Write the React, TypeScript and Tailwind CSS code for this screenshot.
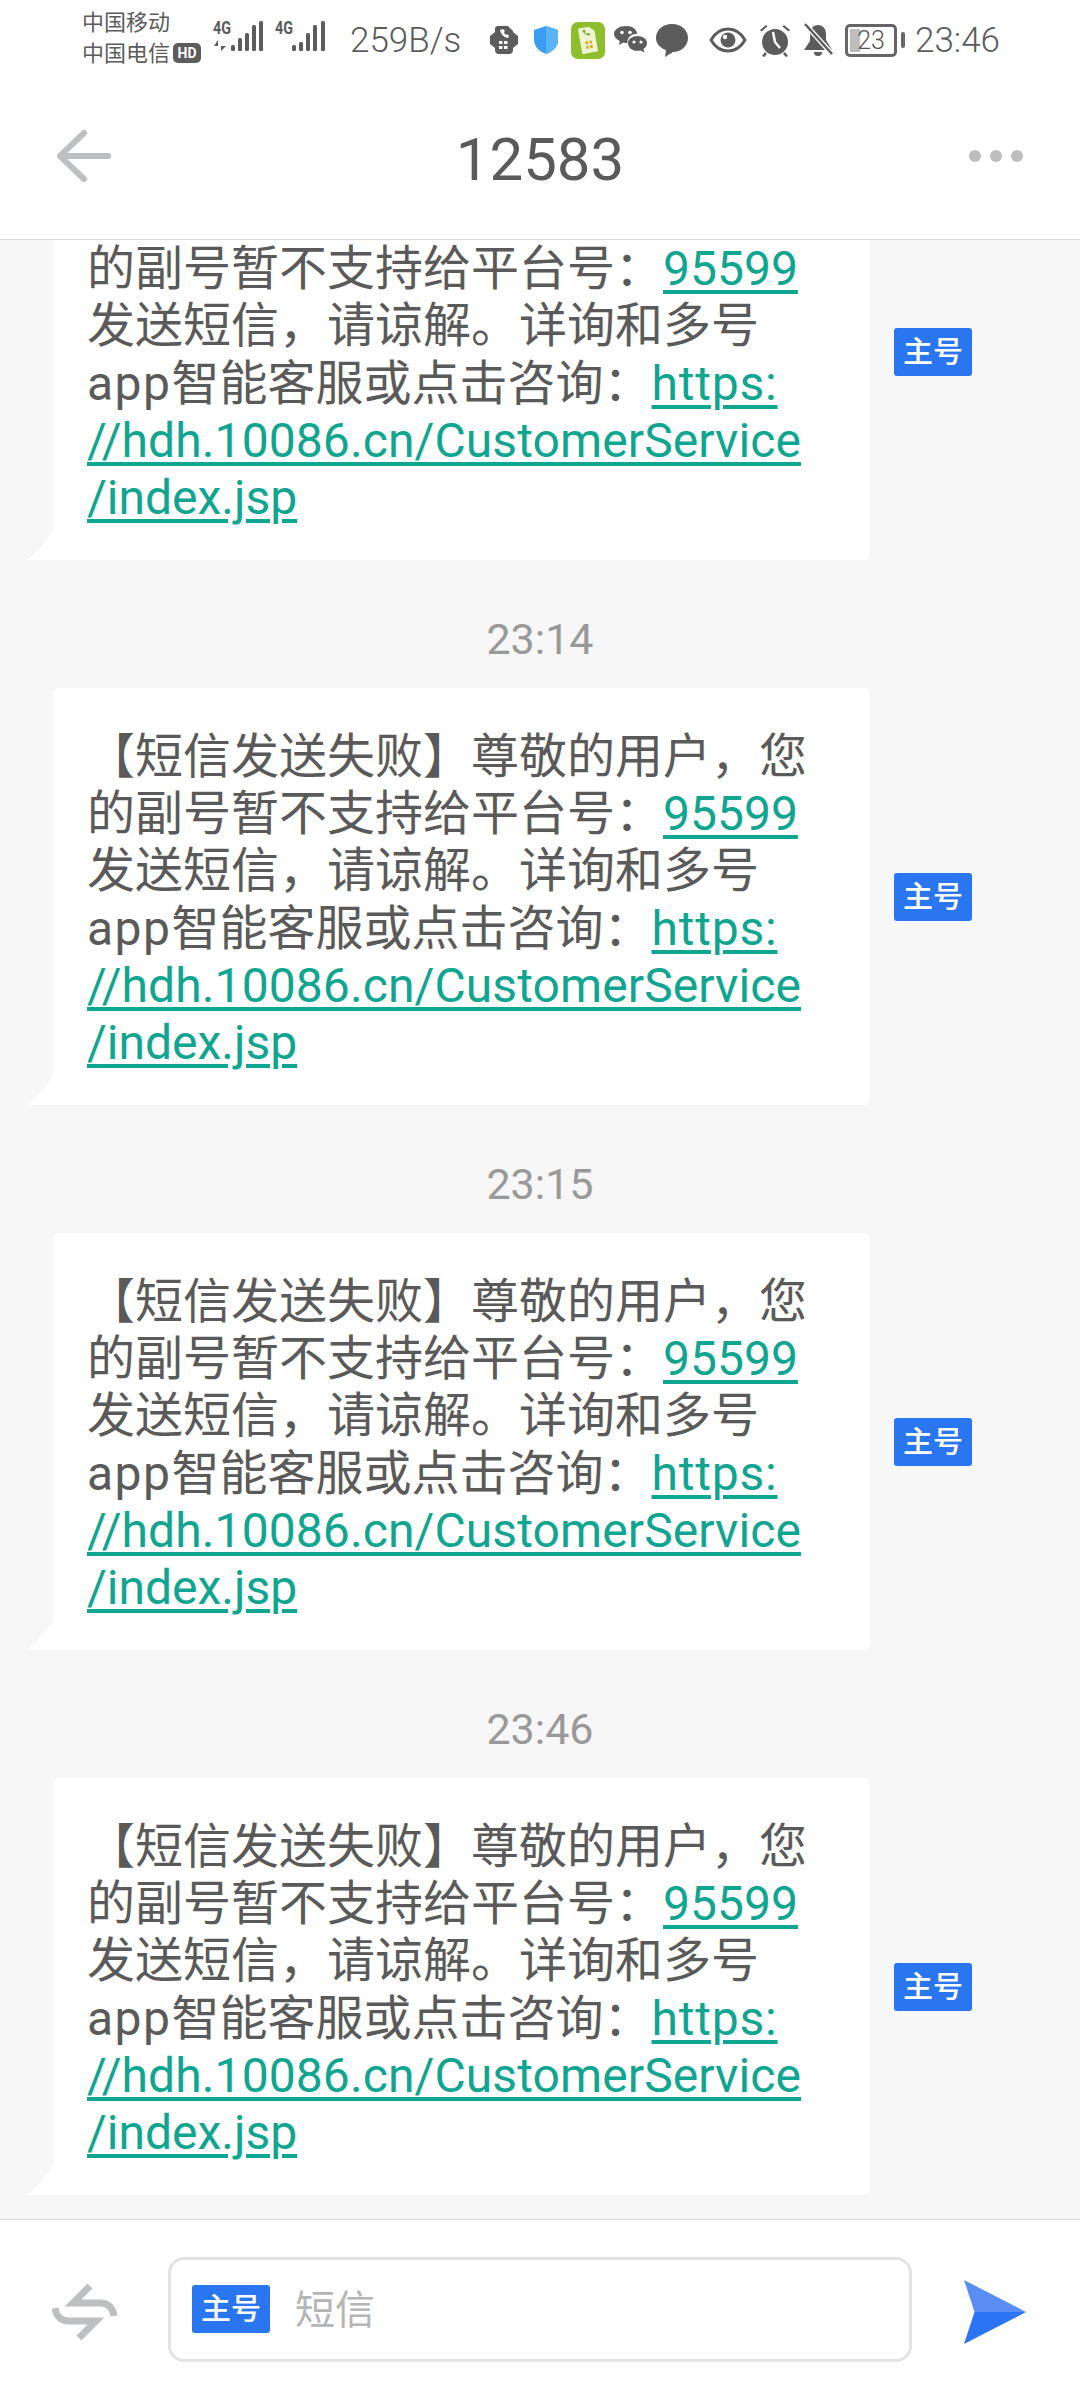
import React from "react";

const times = ["23:14", "23:15", "23:46"];

// y = 0 of the viewBox is the top of the 4G label, the extra room above keeps the text box inside
function Signal({ hasArrows }: { hasArrows?: boolean }) {
  const bars = hasArrows
    ? [
        { x: 25, y: 18, h: 13 },
        { x: 32, y: 13, h: 18 },
        { x: 39, y: 5, h: 26 },
        { x: 46, y: 1, h: 30 },
      ]
    : [
        { x: 24, y: 22, h: 9 },
        { x: 31, y: 13, h: 18 },
        { x: 38, y: 5, h: 26 },
        { x: 46, y: 1, h: 30 },
      ];
  return (
    <svg width="50" height="40" viewBox="0 -6 50 40" fill="#5c5c5c">
      <text x="0" y="14" fontSize="19" fontWeight="700" textLength="18" lengthAdjust="spacingAndGlyphs" fontFamily="Roboto, sans-serif">
        4G
      </text>
      {hasArrows && <path d="M5 31V20l-4 6h4zM8 20v11l5-5H8z" />}
      <rect x={hasArrows ? 18 : 17} y="25" width="4" height="6" rx="1.500" />
      {bars.map((b) => (
        <rect key={b.x} x={b.x} y={b.y} width="4" height={b.h} rx="1.500" />
      ))}
    </svg>
  );
}

function DualSimIcon() {
  return (
    <svg width="30" height="30" viewBox="0 0 30 30" fill="#5c5c5c">
      <path d="M1 11l5-4v16l-5-4zM29 11l-5-4v16l5-4z" />
      <path d="M9 1h10l5 5v19a4 4 0 0 1-4 4H10a4 4 0 0 1-4-4V4a3 3 0 0 1 3-3z" />
      <path d="M11 5c1 4 3 7 8 8l1-2-2-2-1 1c-1-1-2-2-2-3l1-1-2-2z" fill="#fff" />
      <path d="M10 16h3.500v3H10zM15 16h3.500v3H15zM10 21h3.500v3H10zM15 21h3.500v3H15z" fill="#fff" />
    </svg>
  );
}

function ShieldIcon() {
  return (
    <div className="w-[33px] h-[37px] flex items-center justify-center bg-white">
      <svg width="24" height="28" viewBox="0 0 24 28">
        <path d="M12 0l12 4v10c0 7-6 12-12 14C6 26 0 21 0 14V4z" fill="#3a9df2" />
        <path d="M12 0l12 4v10c0 7-6 12-12 14z" fill="#58b4f7" />
      </svg>
    </div>
  );
}

function SimAppIcon() {
  return (
    <div className="w-[34px] h-[37px] rounded-[7px] bg-[#8dbe2d] flex items-center justify-center">
      <svg width="20" height="28" viewBox="0 0 20 28">
        <g transform="rotate(-10 10 14)">
          <path d="M3 1h10l5 5v20a1 1 0 0 1-1 1H3a1 1 0 0 1-1-1V2a1 1 0 0 1 1-1z" fill="#eef4cf" />
          <path d="M6 4c1 3 3 5 6 6l1-2-2-1-1 1-2-2 1-1-1-2z" fill="#6f9f20" />
          <path d="M7 15h2.500v3H7zM11 15h2.500v3H11zM7 19.500h2.500v3H7zM11 19.500h2.500v3H11z" fill="#d9a92c" />
        </g>
      </svg>
    </div>
  );
}

function WechatIcon() {
  return (
    <svg width="33" height="29" viewBox="0 0 33 29" fill="#5c5c5c">
      <path d="M12 0c6.500 0 11 3.500 11 8-5-.5-10 3-9.500 9-1.500 0-3 0-4-.5L5 19l.8-4C2 13 0 10.500 0 8c0-4.500 5.500-8 12-8z" />
      <path d="M23.500 10c5 0 9.500 3 9.500 7 0 2.500-1.500 4.500-3.500 6l.8 3.500-3.800-2c-4.500 1.200-12.500-.5-12.500-7.500 0-4 4.500-7 9.500-7z" />
      <circle cx="8" cy="6.500" r="1.800" fill="#fff" />
      <circle cx="16" cy="6.500" r="1.800" fill="#fff" />
      <circle cx="20" cy="16" r="1.600" fill="#fff" />
      <circle cx="27" cy="16" r="1.600" fill="#fff" />
    </svg>
  );
}

function ChatIcon() {
  return (
    <svg width="32" height="33" viewBox="0 0 32 33" fill="#5c5c5c">
      <path d="M16 0c9 0 16 6 16 14s-7 14-15 14l-8 5 1-7C4 24 0 19.500 0 14 0 6 7 0 16 0z" />
    </svg>
  );
}

function EyeIcon() {
  return (
    <svg width="38" height="26" viewBox="0 0 38 26">
      <path d="M2 13C6 6 12 2 19 2s13 4 17 11c-4 7-10 11-17 11S6 20 2 13z" fill="none" stroke="#5c5c5c" strokeWidth="3" />
      <circle cx="19" cy="13" r="7.500" fill="#5c5c5c" />
      <circle cx="16" cy="10" r="2.200" fill="#fff" />
    </svg>
  );
}

function AlarmIcon() {
  return (
    <svg width="34" height="34" viewBox="0 0 34 34" fill="#5c5c5c">
      <circle cx="17" cy="19" r="13" />
      <path d="M2 7l6-5 1.500 1.500-6 5zM32 7l-6-5-1.500 1.500 6 5zM7 29l-3 4 2 1 3-3zM27 29l3 4-2 1-3-3z" />
      <path d="M15 9l2 10 5 6" fill="none" stroke="#fff" strokeWidth="2.500" />
    </svg>
  );
}

function BellOffIcon() {
  return (
    <svg width="30" height="34" viewBox="0 0 30 34" fill="#5c5c5c">
      <path d="M15 2c5 0 8 4 8 9v6l6 10H1l6-9v-7c0-5 3-9 8-9z" />
      <path d="M11 29h8a4 4 0 0 1-8 0z" />
      <path d="M2 1l27 30" stroke="#fff" strokeWidth="5" />
      <path d="M2 1l27 30" stroke="#5c5c5c" strokeWidth="2.500" />
    </svg>
  );
}

function Battery() {
  return (
    <div className="flex items-center gap-[4px]">
      <div className="relative w-[52px] h-[33px] rounded-[5px] border-[3px] border-[#666] flex items-center justify-center">
        <div className="absolute left-[2px] top-[2px] bottom-[2px] w-[10px] bg-[#bdbdbd]" />
        <span className="relative text-[25px] leading-none text-[#555] font-light font-['Roboto',sans-serif]">23</span>
      </div>
      <div className="w-[4px] h-[16px] rounded-sm bg-[#666]" />
    </div>
  );
}

function StatusBar() {
  return (
    <div className="flex h-[80px] items-center pl-[82px] text-[#5c5c5c] font-['Roboto','Noto_Sans_CJK_SC',sans-serif]">
      <div className="w-[131px] text-[22px] leading-[31px] mt-[-5px]">
        <div>中国移动</div>
        <div className="flex items-center gap-[3px]">
          中国电信
          <span className="w-[28px] h-[20px] rounded-[5px] bg-[#5c5c5c] text-white text-[14px] leading-[20px] font-bold text-center font-['Roboto',sans-serif]">
            HD
          </span>
        </div>
      </div>
      <div className="flex gap-[12px] mt-[-12px]">
        <Signal hasArrows />
        <Signal />
      </div>
      <span className="ml-[25px] w-[139px] text-[35px] leading-none font-light">259B/s</span>
      <DualSimIcon />
      <div className="ml-[10px] flex items-center gap-[9px]">
        <ShieldIcon />
        <SimAppIcon />
        <WechatIcon />
        <ChatIcon />
      </div>
      <div className="ml-[21px] flex items-center gap-[11px]">
        <EyeIcon />
        <AlarmIcon />
        <BellOffIcon />
      </div>
      <div className="ml-[12px]">
        <Battery />
      </div>
      <span className="ml-[10px] text-[35px] leading-none font-light">23:46</span>
    </div>
  );
}

function Header() {
  return (
    <div className="relative flex h-[160px] items-center justify-center border-b border-[#dcdcdc]">
      <svg className="absolute left-[57px] top-[50px]" width="54" height="52" viewBox="0 0 54 52" fill="none" stroke="#bdbfc1" strokeWidth="6" strokeLinecap="round" strokeLinejoin="round">
        <path d="M27 3L3 26l24 23M4 26h47" />
      </svg>
      <span className="text-[60px] leading-none text-[#5a5a5a] font-['Roboto',sans-serif]">12583</span>
      <div className="absolute left-[969px] top-[70px] flex gap-[9px]">
        <div className="size-[12px] rounded-full bg-[#bdbdbd]" />
        <div className="size-[12px] rounded-full bg-[#bdbdbd]" />
        <div className="size-[12px] rounded-full bg-[#bdbdbd]" />
      </div>
    </div>
  );
}

function SimBadge() {
  return (
    <div className="w-[78px] h-[48px] shrink-0 rounded-[3px] bg-[#2a76f0] text-white text-[30px] leading-[47px] text-center font-medium">
      主号
    </div>
  );
}

function Link({ children, className }: { children: React.ReactNode; className?: string }) {
  return <span className={`text-[#10a590] underline decoration-[4px] underline-offset-[5px] ${className ?? ""}`}>{children}</span>;
}

function Bubble() {
  return (
    <div className="flex items-center pl-[53px] gap-[24px]">
      <div className="relative w-[817px] h-[417px] rounded-[6px] rounded-bl-none bg-white pl-[34px] pt-[40px] text-[48px] leading-[57.200px] text-[#5a5a5a] whitespace-nowrap">
        <div>【短信发送失败】尊敬的用户，您</div>
        <div>
          的副号暂不支持给平台号：<Link>95599</Link>
        </div>
        <div>发送短信，请谅解。详询和多号</div>
        <div>
          <span className="tracking-[1.500px]">app</span>智能客服或点击咨询：<Link className="tracking-[0.800px]">https:</Link>
        </div>
        <div>
          <Link className="tracking-[0.100px]">//hdh.10086.cn/CustomerService</Link>
        </div>
        <div>
          <Link>/index.jsp</Link>
        </div>
        <svg className="absolute left-[-27px] bottom-0" width="27" height="30" viewBox="0 0 27 30" fill="#fff">
          <path d="M27 0v30H0C8 27 21 10 27 0z" />
        </svg>
      </div>
      <SimBadge />
    </div>
  );
}

function TimeLabel({ time }: { time: string }) {
  return <div className="mt-[50px] mb-[20px] h-[58px] text-center text-[43px] leading-[58px] text-[#999]">{time}</div>;
}

function Composer() {
  return (
    <div className="flex h-[181px] items-center border-t border-[#dcdcdc] bg-white pb-[2px] pl-[52px]">
      <svg className="mt-[6px]" width="66" height="58" viewBox="0 0 66 58" fill="none" stroke="#bdbfc1" strokeWidth="7">
        <path d="M38 3L21 20h27c8 0 13 5 14 13" />
        <path d="M27 55l17-17H17C9 38 4 33 3 25" />
      </svg>
      <div className="ml-[50px] flex h-[105px] w-[744px] items-center rounded-[16px] border-[3px] border-[#e3e3e3] pl-[21px]">
        <SimBadge />
        <span className="ml-[25px] mt-[3px] text-[40px] leading-none text-[#b5b5b5]">短信</span>
      </div>
      <svg className="ml-[52px] mt-[6px]" width="63" height="64" viewBox="0 0 63 64">
        <path d="M0 0l62 32H10.500z" fill="#5b8ef5" />
        <path d="M0 64l62-32H10.500z" fill="#2b74f5" />
      </svg>
    </div>
  );
}

export default function App() {
  return (
    <div className="flex h-[2400px] w-[1080px] flex-col overflow-hidden bg-white font-['Roboto','Noto_Sans_CJK_SC',sans-serif]">
      <StatusBar />
      <Header />
      <div className="flex min-h-0 flex-1 flex-col justify-end overflow-hidden bg-[#f7f7f7] pb-[24px]">
        <Bubble />
        {times.map((t) => (
          <div key={t}>
            <TimeLabel time={t} />
            <Bubble />
          </div>
        ))}
      </div>
      <Composer />
    </div>
  );
}
